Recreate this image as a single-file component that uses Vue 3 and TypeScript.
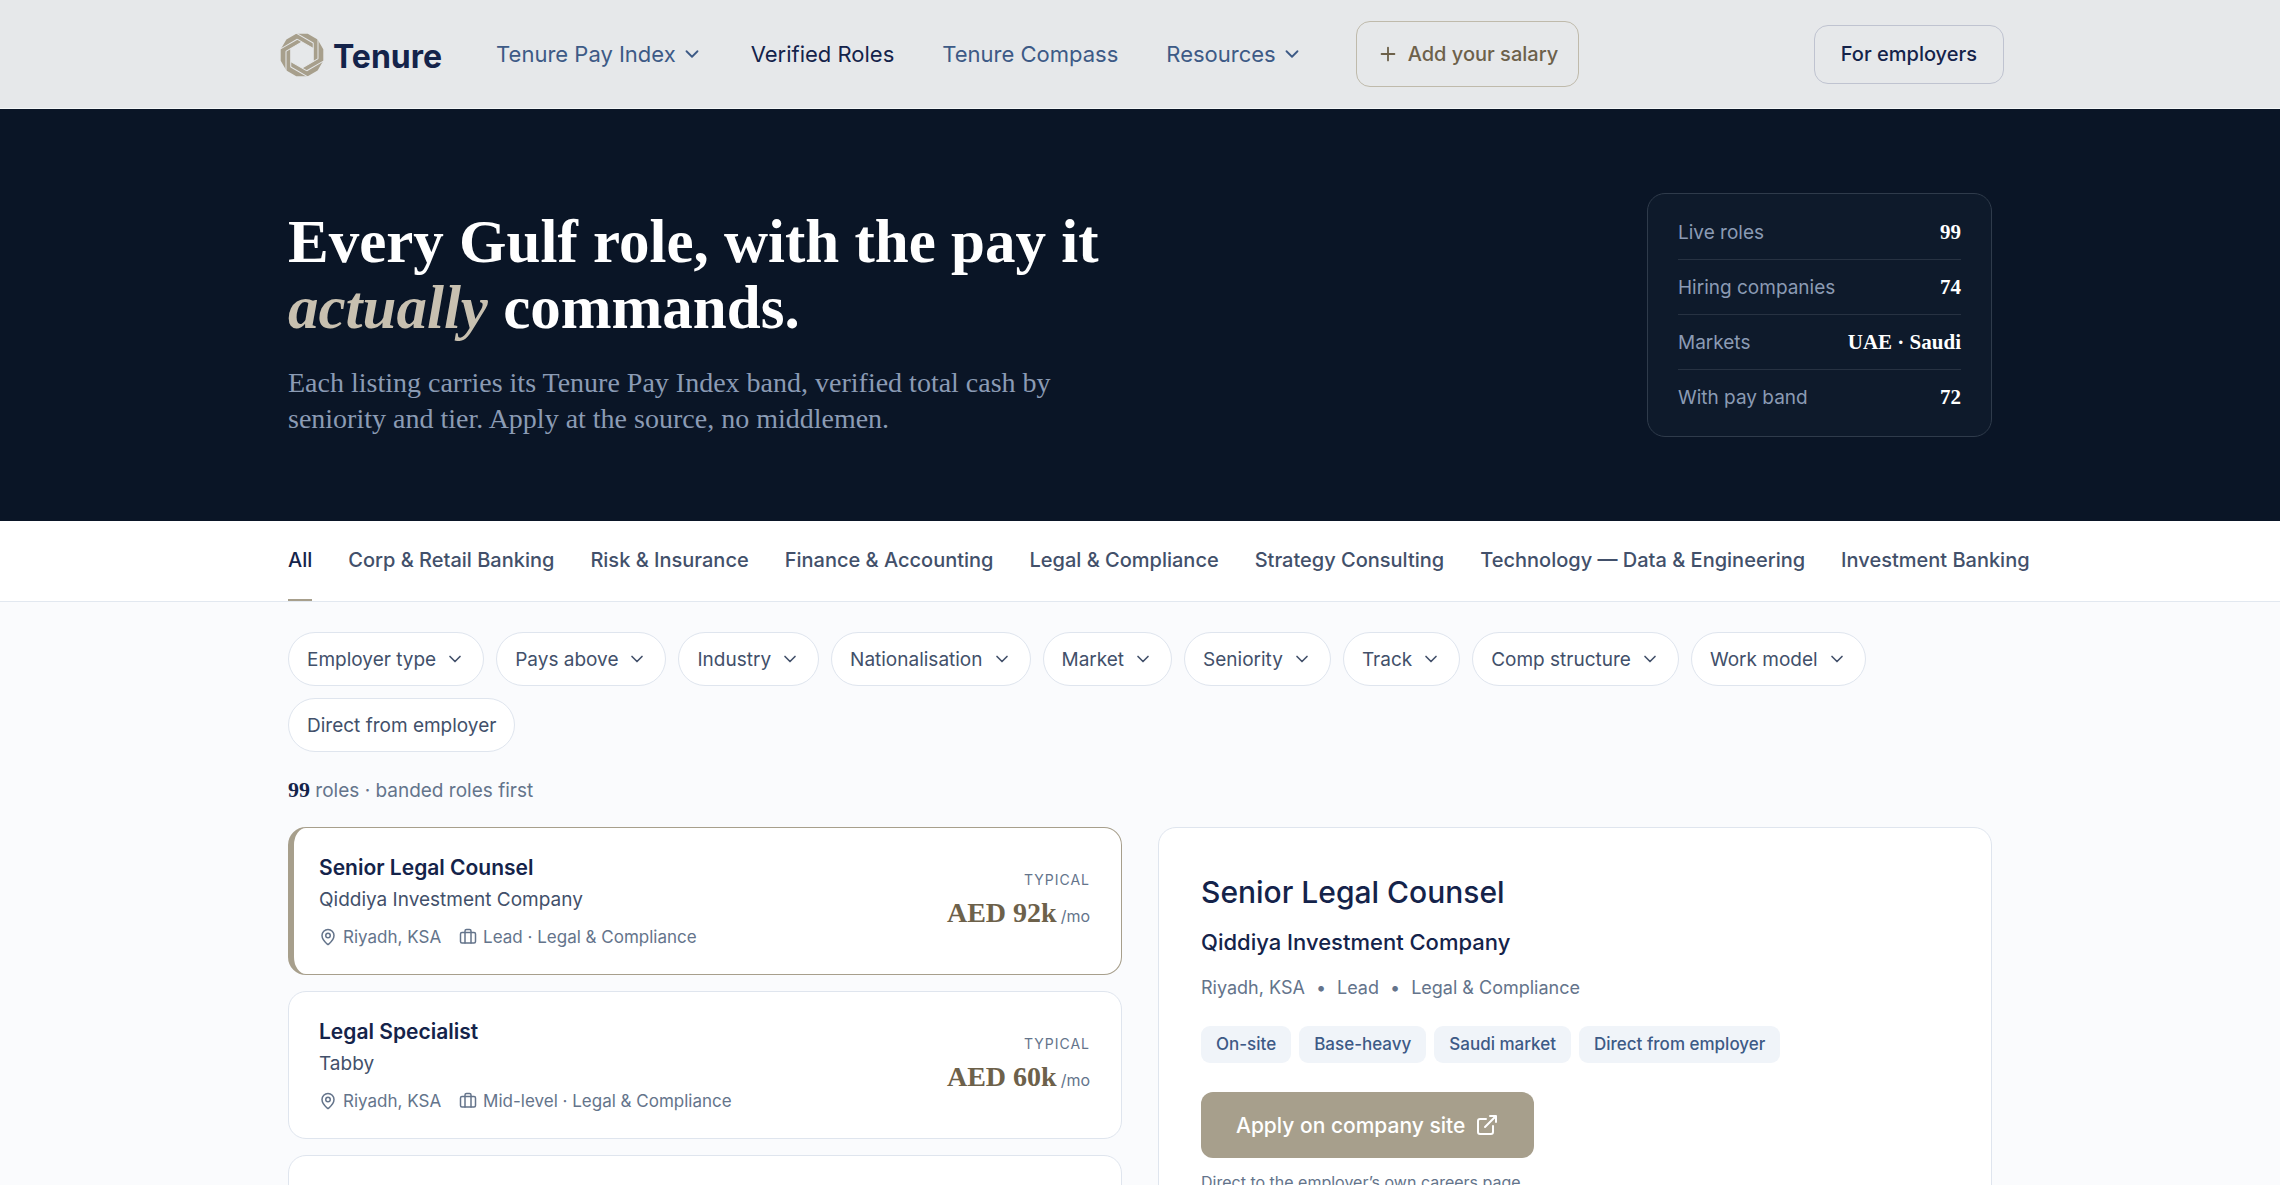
<script setup lang="ts">
interface NavItem {
  label: string
  menu?: boolean
  active?: boolean
}
interface Role {
  id: number
  title: string
  company: string
  place: string
  track: string
  pay: string
}

const nav: NavItem[] = [
  { label: 'Tenure Pay Index', menu: true },
  { label: 'Verified Roles', active: true },
  { label: 'Tenure Compass' },
  { label: 'Resources', menu: true },
]
const stats = [
  { label: 'Live roles', value: '99' },
  { label: 'Hiring companies', value: '74' },
  { label: 'Markets', value: 'UAE · Saudi' },
  { label: 'With pay band', value: '72' },
]
const tabs = [
  'All',
  'Corp & Retail Banking',
  'Risk & Insurance',
  'Finance & Accounting',
  'Legal & Compliance',
  'Strategy Consulting',
  'Technology — Data & Engineering',
  'Investment Banking',
]
const filters = [
  'Employer type',
  'Pays above',
  'Industry',
  'Nationalisation',
  'Market',
  'Seniority',
  'Track',
  'Comp structure',
  'Work model',
]
const roles: Role[] = [
  { id: 1, title: 'Senior Legal Counsel', company: 'Qiddiya Investment Company', place: 'Riyadh, KSA', track: 'Lead · Legal & Compliance', pay: 'AED 92k' },
  { id: 2, title: 'Legal Specialist', company: 'Tabby', place: 'Riyadh, KSA', track: 'Mid-level · Legal & Compliance', pay: 'AED 60k' },
]
const tags = ['On-site', 'Base-heavy', 'Saudi market', 'Direct from employer']
const turns = [0, 60, 120, 180, 240, 300]
</script>

<template>
  <div class="page">
    <header class="topbar">
      <div class="topbar-inner">
        <a class="brand" href="#">
          <svg class="brand-mark" viewBox="-22 -22 44 44" aria-hidden="true">
            <path
              class="mark-fill"
              d="M-5.700 -21.300H5.700L15.600 -15.600L21.300 -5.700V5.700L15.600 15.600L5.700 21.300H-5.700L-15.600 15.600L-21.300 5.700V-5.700L-15.600 -15.600Z M0 -13L-11.260 -6.500V6.500L0 13L11.260 6.500V-6.500Z"
            />
            <path v-for="t in turns" :key="t" class="mark-line" :transform="`rotate(${t})`" d="M16 -16V3.700M11.260 6.500V-12.200" />
          </svg>
          <span>Tenure</span>
        </a>
        <nav class="nav">
          <a v-for="n in nav" :key="n.label" href="#" class="nav-link" :class="{ active: n.active }">
            {{ n.label }}
            <svg v-if="n.menu" class="chev nav-chev" viewBox="0 0 24 24" aria-hidden="true"><path d="m6 9 6 6 6-6" /></svg>
          </a>
        </nav>
        <button type="button" class="salary">
          <svg class="plus" viewBox="0 0 24 24" aria-hidden="true"><path d="M5 12h14M12 5v14" /></svg>
          Add your salary
        </button>
        <button type="button" class="employers">For employers</button>
      </div>
    </header>

    <section class="hero">
      <div class="wrap hero-inner">
        <div>
          <h1>Every Gulf role, with the pay it<br /><em>actually</em> commands.</h1>
          <p>Each listing carries its Tenure Pay Index band, verified total cash by<br />seniority and tier. Apply at the source, no middlemen.</p>
        </div>
        <dl class="stats">
          <div v-for="s in stats" :key="s.label" class="stat">
            <dt>{{ s.label }}</dt>
            <dd>{{ s.value }}</dd>
          </div>
        </dl>
      </div>
    </section>

    <div class="tabs">
      <div class="wrap tabs-inner">
        <button v-for="(t, i) in tabs" :key="t" type="button" class="tab" :class="{ active: i === 0 }">{{ t }}</button>
      </div>
    </div>

    <main class="wrap">
      <div class="filters">
        <button v-for="f in filters" :key="f" type="button" class="chip">
          {{ f }}
          <svg class="chev" viewBox="0 0 24 24" aria-hidden="true"><path d="m6 9 6 6 6-6" /></svg>
        </button>
        <button type="button" class="chip">Direct from employer</button>
      </div>

      <p class="count"><strong>99</strong> roles · banded roles first</p>

      <div class="columns">
        <div class="list">
          <article v-for="(r, i) in roles" :key="r.id" class="card" :class="{ selected: i === 0 }">
            <div>
              <h3>{{ r.title }}</h3>
              <p class="company">{{ r.company }}</p>
              <p class="meta">
                <svg class="ico" viewBox="0 0 24 24" aria-hidden="true">
                  <path d="M20 10c0 5-5.500 10.200-7.400 11.800a1 1 0 0 1-1.200 0C9.500 20.200 4 15 4 10a8 8 0 0 1 16 0" />
                  <circle cx="12" cy="10" r="3" />
                </svg>
                <span>{{ r.place }}</span>
                <svg class="ico case" viewBox="0 0 24 24" aria-hidden="true">
                  <path d="M16 20V4a2 2 0 0 0-2-2h-4a2 2 0 0 0-2 2v16" />
                  <rect x="2" y="6" width="20" height="14" rx="2" />
                </svg>
                <span>{{ r.track }}</span>
              </p>
            </div>
            <div class="pay">
              <div class="pay-label">TYPICAL</div>
              <div class="pay-value">{{ r.pay }}<span>/mo</span></div>
            </div>
          </article>
          <article class="card"></article>
        </div>

        <article class="detail">
          <h2>Senior Legal Counsel</h2>
          <p class="detail-company">Qiddiya Investment Company</p>
          <p class="detail-meta"><span>Riyadh, KSA</span><span>•</span><span>Lead</span><span>•</span><span>Legal &amp; Compliance</span></p>
          <ul class="tags">
            <li v-for="t in tags" :key="t">{{ t }}</li>
          </ul>
          <a class="apply" href="#">
            Apply on company site
            <svg viewBox="0 0 24 24" aria-hidden="true">
              <path d="M15 3h6v6M10 14 21 3M18 13v6a2 2 0 0 1-2 2H5a2 2 0 0 1-2-2V8a2 2 0 0 1 2-2h6" />
            </svg>
          </a>
          <p class="note">Direct to the employer’s own careers page.</p>
        </article>
      </div>
    </main>
  </div>
</template>

<style>
body {
  margin: 0;
  background: #fafbfd;
}
</style>

<style scoped>
.page {
  height: 100vh;
  overflow: hidden;
  background: #fafbfd;
  color: #14234a;
  font-family: Inter, "Liberation Sans", sans-serif;
}
.page * {
  box-sizing: border-box;
}
h1, h2, h3, p, dl, dd, ul {
  margin: 0;
  padding: 0;
}
button {
  font: inherit;
  cursor: pointer;
}
a {
  text-decoration: none;
}
svg {
  flex: none;
  fill: none;
  stroke: currentColor;
  stroke-width: 2;
  stroke-linecap: round;
  stroke-linejoin: round;
}
.wrap {
  width: 100%;
  max-width: 1704px;
  margin: 0 auto;
}

.topbar {
  background: #e6e8ea;
  border-bottom: 1px solid #f4f7f8;
}
.topbar-inner {
  display: flex;
  align-items: center;
  max-width: 1728px;
  height: 108px;
  margin: 0 auto;
}
.brand {
  display: flex;
  align-items: center;
  gap: 9px;
  padding: 2px 0 0 4px;
  color: #14234a;
  font-size: 32px;
  font-weight: 700;
  line-height: 44px;
}
.brand span {
  padding-top: 4px;
}
.brand-mark {
  width: 44px;
  height: 44px;
}
.mark-fill {
  fill: #a79f8c;
  fill-rule: evenodd;
  stroke: none;
}
.mark-line {
  stroke: #e6e8ea;
  stroke-width: 1;
  stroke-linecap: butt;
}
.nav {
  display: flex;
  gap: 48px;
  margin-left: 54px;
}
.nav-link {
  display: flex;
  align-items: center;
  gap: 5px;
  color: #3d5a86;
  font-size: 22px;
  line-height: 32px;
}
.nav-link.active {
  color: #14234a;
}
.chev {
  width: 20px;
  height: 20px;
}
.nav-chev {
  width: 22px;
  height: 22px;
}
.salary,
.employers {
  display: flex;
  align-items: center;
  border-radius: 14px;
  background: transparent;
  font-size: 20px;
  font-weight: 500;
}
.salary {
  gap: 9px;
  height: 66px;
  margin-left: 53px;
  padding: 0 20px;
  border: 1px solid #bfbaab;
  color: #6d614a;
}
.plus {
  width: 22px;
  height: 22px;
}
.employers {
  height: 59px;
  margin-left: auto;
  padding: 0 26px;
  border: 1px solid #bfc3d0;
  color: #14234a;
}

.hero {
  background: #0a1526;
}
.hero-inner {
  display: flex;
  align-items: flex-end;
  justify-content: space-between;
  padding: 84px 0;
}
h1 {
  color: #fff;
  font-family: "Liberation Serif", serif;
  font-size: 61px;
  font-weight: 700;
  line-height: 66px;
}
h1 em {
  color: #c8c0b0;
}
.hero p {
  margin-top: 24px;
  color: #8b9bb4;
  font-family: "Liberation Serif", serif;
  font-size: 28px;
  line-height: 36px;
}
.stats {
  width: 345px;
  padding: 11px 30px;
  border: 1px solid #2f3b4b;
  border-radius: 18px;
  background: #0e1a2b;
}
.stat {
  display: flex;
  align-items: center;
  justify-content: space-between;
  height: 55px;
  border-bottom: 1px solid #273242;
}
.stat:last-child {
  border-bottom: 0;
}
dt {
  color: #8b9bb4;
  font-size: 19px;
}
dd {
  color: #fff;
  font-family: "Liberation Serif", serif;
  font-size: 21px;
  font-weight: 700;
}

.tabs {
  background: #fff;
  border-bottom: 1px solid #e2e8f0;
}
.tabs-inner {
  display: flex;
  gap: 36px;
}
.tab {
  flex: none;
  height: 80px;
  padding: 0;
  border: 0;
  border-bottom: 2px solid transparent;
  background: none;
  color: #42506a;
  font-size: 20px;
  font-weight: 500;
  white-space: nowrap;
}
.tab.active {
  border-color: #a79f8c;
  color: #14234a;
}

.filters {
  display: flex;
  flex-wrap: wrap;
  gap: 12px;
  padding-top: 30px;
}
.chip {
  display: flex;
  align-items: center;
  gap: 9px;
  height: 54px;
  padding: 0 18px;
  border: 1px solid #dfe5ee;
  border-radius: 27px;
  background: #fff;
  color: #42506a;
  font-size: 19px;
}
.count {
  margin-top: 24px;
  color: #64748b;
  font-size: 19px;
  line-height: 28px;
}
.count strong {
  color: #14234a;
  font-family: "Liberation Serif", serif;
  font-size: 22px;
}

.columns {
  display: grid;
  grid-template-columns: 1fr 1fr;
  gap: 36px;
  margin-top: 22px;
}
.list {
  display: flex;
  flex-direction: column;
  gap: 16px;
}
.card {
  display: flex;
  align-items: center;
  justify-content: space-between;
  min-height: 148px;
  padding: 2px 31px 0 30px;
  border: 1px solid #dfe5ee;
  border-radius: 18px;
  background: #fff;
}
.card.selected {
  padding-left: 25px;
  border-color: #a79f8c;
  border-left-width: 6px;
}
h3 {
  font-size: 21px;
  font-weight: 600;
  line-height: 32px;
}
.company {
  color: #42506a;
  font-size: 19px;
  line-height: 32px;
}
.meta {
  display: flex;
  align-items: center;
  margin-top: 5px;
  color: #64748b;
  font-size: 17px;
  line-height: 32px;
}
.ico {
  width: 18px;
  height: 18px;
  margin-right: 6px;
}
.case {
  margin-left: 18px;
}
.pay {
  text-align: right;
}
.pay-label {
  color: #64748b;
  font-size: 14px;
  letter-spacing: 1px;
  line-height: 24px;
}
.pay-value {
  color: #6d614a;
  font-family: "Liberation Serif", serif;
  font-size: 28px;
  font-weight: 700;
  line-height: 42px;
}
.pay-value span {
  margin-left: 4px;
  color: #64748b;
  font-family: Inter, sans-serif;
  font-size: 16px;
  font-weight: 400;
}

.detail {
  padding: 42px;
  border: 1px solid #dfe5ee;
  border-radius: 18px;
  background: #fff;
}
h2 {
  font-size: 30px;
  font-weight: 500;
  line-height: 44px;
}
.detail-company {
  margin-top: 12px;
  font-size: 22px;
  font-weight: 500;
  line-height: 32px;
}
.detail-meta {
  display: flex;
  gap: 11px;
  margin-top: 14px;
  color: #64748b;
  font-size: 18px;
  line-height: 32px;
}
.tags {
  display: flex;
  gap: 8px;
  margin-top: 22px;
  list-style: none;
}
.tags li {
  padding: 0 15px;
  border-radius: 9px;
  background: #f0f4f9;
  color: #3d5a86;
  font-size: 17px;
  font-weight: 500;
  line-height: 37px;
}
.apply {
  display: inline-flex;
  align-items: center;
  gap: 10px;
  height: 66px;
  margin-top: 29px;
  padding: 0 35px;
  border-radius: 12px;
  background: #a79f8c;
  color: #fff;
  font-size: 21px;
  font-weight: 500;
}
.apply svg {
  width: 24px;
  height: 24px;
}
.note {
  margin-top: 12px;
  color: #64748b;
  font-size: 16px;
  line-height: 24px;
}
</style>
